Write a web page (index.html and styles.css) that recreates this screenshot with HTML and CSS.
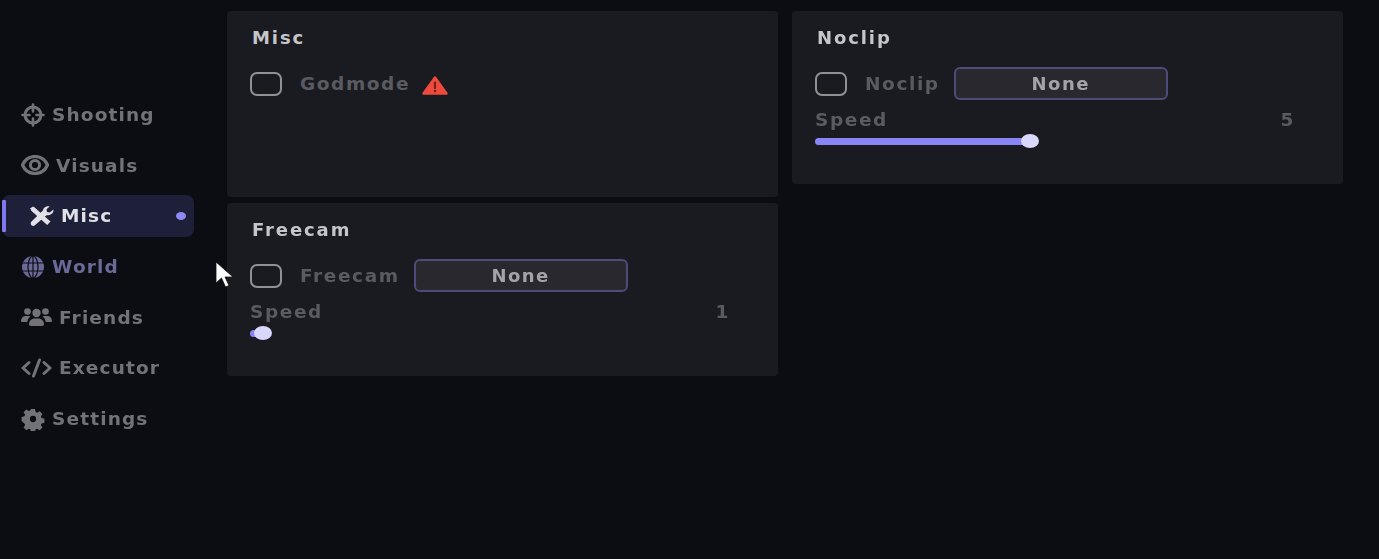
FILE: index.html
```html
<!DOCTYPE html>
<html>
  <head>
    <title>Menu</title>
    <link rel="stylesheet" href="styles.css">
  </head>
  <body>
    <div class="window">

      <nav class="sidebar">
        <a class="nav-item">
          <svg class="icon" width="24" height="24" viewBox="0 0 24 24" fill="none" stroke="currentColor">
            <circle cx="12" cy="12" r="8" stroke-width="3"/>
            <path d="M12 1.500v7M12 15.500v7M1.500 12h7M15.500 12h7" stroke-width="2.600" stroke-linecap="round"/>
          </svg>
          Shooting
        </a>
        <a class="nav-item">
          <svg class="icon" width="28" height="20" viewBox="0 0 28 20">
            <path d="M14 1.500C8 1.500 3.500 5.500 1.500 10c2 4.500 6.500 8.500 12.500 8.500S24.500 14.500 26.500 10C24.500 5.500 20 1.500 14 1.500z" fill="none" stroke="currentColor" stroke-width="3.200"/>
            <circle cx="14" cy="10" r="4.600" fill="none" stroke="currentColor" stroke-width="3"/>
          </svg>
          Visuals
        </a>
        <a class="nav-item active">
          <svg class="icon" width="25" height="20" viewBox="0 0 25 20">
            <path d="M5 1l16.500 14.500-3.300 3.500L2 4.500z" fill="currentColor"/>
            <path d="M1 2.500L4 .5l4 3.500-3 3z" fill="currentColor"/>
            <path d="M24.500 3.500l-3.800 3-2.700-.5-.5-2.700 3.200-2.800c-3-.9-6.500.8-6.800 4L2.500 15.500c-1.100 1.100-1.100 2.800 0 3.700.9.900 2.500.900 3.400 0L17.500 9.300c3.500.3 7.300-2 7-5.800z" fill="currentColor"/>
          </svg>
          Misc
          <span class="dot"></span>
        </a>
        <a class="nav-item hover">
          <svg class="icon" width="24" height="24" viewBox="0 0 24 24" fill="none">
            <circle cx="12" cy="12" r="11" fill="currentColor"/>
            <g stroke="#0c0d12" stroke-width="1.200">
              <ellipse cx="12" cy="12" rx="5" ry="11"/>
              <path d="M12 1v22M1 8h22M1 16h22"/>
            </g>
          </svg>
          World
        </a>
        <a class="nav-item">
          <svg class="icon" width="31" height="20" viewBox="0 0 31 20" fill="currentColor">
            <circle cx="6.500" cy="4.500" r="3.300"/>
            <circle cx="24.500" cy="4.500" r="3.300"/>
            <circle cx="15.500" cy="6" r="4.200"/>
            <path d="M0 14c0-3 2-5 4.500-5h3.500c.8 0 1.200.3 1.500.6-1.800 1.200-3 3-3.200 5.400H1c-.6 0-1-.4-1-1z"/>
            <path d="M31 14c0-3-2-5-4.500-5H23c-.8 0-1.200.3-1.500.6 1.800 1.200 3 3 3.200 5.400H30c.6 0 1-.4 1-1z"/>
            <path d="M8 17c0-3 2.500-5.500 5.500-5.500h4c3 0 5.500 2.500 5.500 5.500 0 1.200-.8 2-2 2H10c-1.200 0-2-.8-2-2z"/>
          </svg>
          Friends
        </a>
        <a class="nav-item">
          <svg class="icon" width="31" height="20" viewBox="0 0 31 20" fill="none" stroke="currentColor" stroke-width="3" stroke-linecap="round" stroke-linejoin="round">
            <path d="M8 4.500L2 10l6 5.500M23 4.500l6 5.500-6 5.500M18.500 2l-6 16"/>
          </svg>
          Executor
        </a>
        <a class="nav-item">
          <svg class="icon" width="24" height="24" viewBox="0 0 24 24" fill="currentColor">
            <path fill-rule="evenodd" d="M9.800 1h4.400l.7 3.300 1.700.8 2.900-1.700 3 3-1.800 2.900.8 1.600 3.200.8v4.400l-3.200.8-.8 1.700 1.800 2.800-3 3-2.900-1.700-1.700.8-.7 3.200H9.800l-.7-3.200-1.700-.8-2.900 1.700-3-3 1.800-2.800-.8-1.700L-.7 14.200V9.700l3.200-.8.800-1.600-1.800-2.900 3-3 2.900 1.700 1.700-.8zM12 8.500a3.500 3.500 0 1 0 0 7 3.500 3.500 0 0 0 0-7z" transform="translate(1.200 1.200) scale(.9)"/>
          </svg>
          Settings
        </a>
      </nav>

      <main class="content">
        <div class="column">
          <section class="card tall">
            <h2>Misc</h2>
            <div class="row">
              <span class="checkbox"></span>
              <span class="label">Godmode</span>
              <svg class="warn" width="26" height="19" viewBox="0 0 26 19">
                <path d="M13 1.500L1.500 17.500h23z" fill="#ee4b3d" stroke="#ee4b3d" stroke-width="2.400" stroke-linejoin="round"/>
                <path d="M13 6.500v5.500" stroke="#7a1f1a" stroke-width="2.200" stroke-linecap="round"/>
                <circle cx="13" cy="15" r="1.300" fill="#7a1f1a"/>
              </svg>
            </div>
          </section>

          <section class="card">
            <h2>Freecam</h2>
            <div class="row">
              <span class="checkbox"></span>
              <span class="label">Freecam</span>
              <button class="bind">None</button>
            </div>
            <div class="slider-head">
              <span>Speed</span>
              <span>1</span>
            </div>
            <div class="slider">
              <div class="fill" style="width: 13px"></div>
              <div class="thumb"></div>
            </div>
          </section>
        </div>

        <div class="column">
          <section class="card">
            <h2>Noclip</h2>
            <div class="row">
              <span class="checkbox"></span>
              <span class="label">Noclip</span>
              <button class="bind">None</button>
            </div>
            <div class="slider-head">
              <span>Speed</span>
              <span>5</span>
            </div>
            <div class="slider">
              <div class="fill" style="width: 215px"></div>
              <div class="thumb"></div>
            </div>
          </section>
        </div>
      </main>

      <svg class="cursor" width="22" height="28" viewBox="0 0 22 28">
        <path d="M1 1v21l5.500-5 4 9 3.500-1.500-4-8.500H18z" fill="#ffffff" stroke="#111" stroke-width=".8"/>
      </svg>
    </div>
  </body>
</html>
```

FILE: styles.css
```css
* {
    box-sizing: border-box;
}

body {
    margin: 0;
    padding: 0;
    background-color: #0c0d12;
    font-family: "DejaVu Sans", sans-serif;
    font-weight: bold;
    overflow: hidden;
}

.window {
    position: relative;
    display: flex;
    flex-direction: row;
    align-items: flex-start;
    width: 1379px;
    height: 559px;
    filter: blur(0.6px);
}

.sidebar {
    width: 227px;
    flex-shrink: 0;
    display: flex;
    flex-direction: column;
    gap: 8.7px;
    padding: 93.5px 33px 0 2px;
}

.nav-item {
    position: relative;
    display: flex;
    align-items: center;
    gap: 7px;
    height: 42px;
    padding-left: 19px;
    font-size: 18.500px;
    letter-spacing: 1.150px;
    color: #737377;
}

.nav-item.hover {
    color: #6b6997;
}

.nav-item.active {
    padding-left: 27px;
    color: #e0e0e6;
    background-color: #1e1f38;
    border-radius: 8px;
}

.nav-item.active::before {
    content: "";
    position: absolute;
    left: 0;
    top: 5px;
    width: 4px;
    height: 32px;
    background-color: #7f78f0;
    border-radius: 1px;
}

.dot {
    position: absolute;
    right: 8px;
    top: 17px;
    width: 10px;
    height: 8px;
    border-radius: 50%;
    background-color: #8f89f5;
}

.icon {
    flex-shrink: 0;
}

.content {
    display: flex;
    flex-direction: row;
    gap: 14px;
    padding-top: 11px;
}

.column {
    display: flex;
    flex-direction: column;
    gap: 6px;
    width: 551px;
}

.card {
    padding: 16px 48px 36px 23px;
    background-color: #1a1b21;
    border-radius: 4px;
}

.card.tall {
    min-height: 186px;
}

h2 {
    margin: 0 0 18px 2px;
    font-size: 18px;
    line-height: 22px;
    font-weight: bold;
    letter-spacing: 1.900px;
    color: #c6c6c9;
}

.row {
    display: flex;
    align-items: center;
    height: 33px;
}

.checkbox {
    width: 32px;
    height: 24px;
    border: 2px solid #919194;
    border-radius: 7px;
    margin-right: 18px;
}

.label {
    font-size: 18.500px;
    letter-spacing: 1.600px;
    color: #5a5b60;
    margin-right: 14px;
}

.warn {
    margin: 3px 0 0 -2px;
}

.bind {
    width: 214px;
    height: 33px;
    padding: 0;
    background-color: #29282e;
    border: 2px solid #4d4c78;
    border-radius: 6px;
    font-family: "DejaVu Sans", sans-serif;
    font-size: 18px;
    font-weight: bold;
    letter-spacing: 1.500px;
    color: #a4a4a8;
}

.slider-head {
    display: flex;
    justify-content: space-between;
    margin-top: 9px;
    font-size: 18.500px;
    line-height: 22px;
    letter-spacing: 1.600px;
    color: #5a5b60;
}

.slider {
    position: relative;
    display: flex;
    align-items: center;
    height: 14px;
    margin-top: 3px;
}

.fill {
    height: 7px;
    background-color: #8a85f5;
    border-radius: 4px;
}

.thumb {
    width: 18px;
    height: 14px;
    margin-left: -9px;
    background-color: #d9d7fb;
    border-radius: 50%;
}

.cursor {
    position: absolute;
    left: 215px;
    top: 261px;
}
```
